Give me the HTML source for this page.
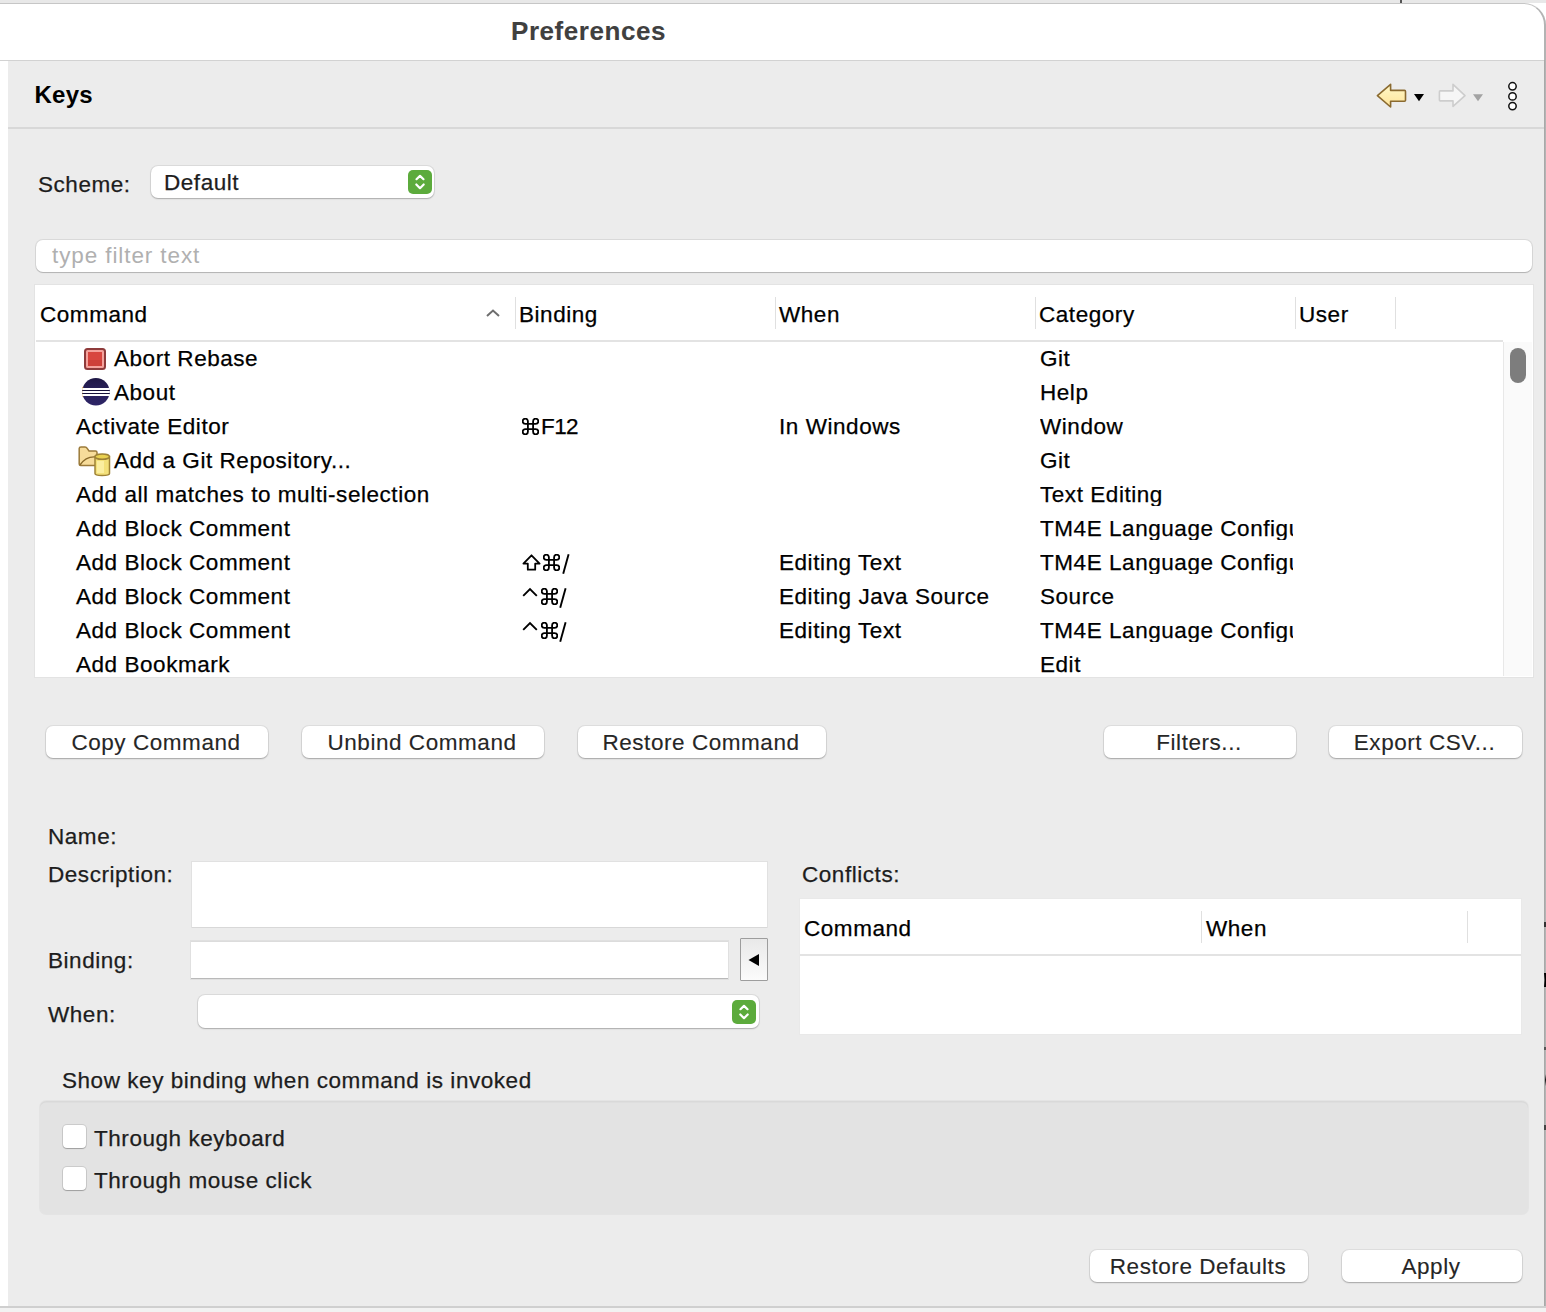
<!DOCTYPE html>
<html><head><meta charset="utf-8">
<style>
*{box-sizing:border-box;margin:0;padding:0}
html,body{width:1546px;height:1312px;overflow:hidden;background:#fff;font-family:"Liberation Sans",sans-serif;color:#1d1d1d;position:relative}
.a{position:absolute}
.t{position:absolute;white-space:nowrap;-webkit-text-stroke:0.25px currentColor}
.btn{position:absolute;background:#fff;border-radius:7px;box-shadow:0 0 0 1px rgba(0,0,0,0.06),0 1px 1.5px rgba(0,0,0,0.25)}
.vsep{position:absolute;width:1px;background:#e0e0e0}
</style></head><body>
<div class="a" style="left:0;top:0;width:1546px;height:3px;background:#e8e8e8"></div>
<div class="a" style="left:1400px;top:0;width:1.5px;height:4px;background:#555"></div>
<div class="a" style="left:0;top:3px;width:1546px;height:57px;background:#fff;border-top-right-radius:22px;border-top:1px solid #c6c6c6;border-right:2px solid #b3b3b3"></div>
<div class="a" style="left:0;top:60px;width:1544px;height:1px;background:#d2d2d2"></div>
<div class="t" style="left:511px;top:18.29px;font-size:26px;line-height:26px;letter-spacing:0.55px;color:#404040;font-weight:700;-webkit-text-stroke:0.1px #404040">Preferences</div>
<div class="a" style="left:1544px;top:60px;width:2px;height:1252px;background:linear-gradient(90deg,#a3a3a3,#b9b9b9)"></div>
<div class="a" style="left:1543px;top:61px;width:1px;height:1245px;background:#f2f2f2"></div>
<svg class="a" style="left:1543px;top:973px" width="3" height="14" viewBox="0 0 3 14"><path d="M1 0 H3 V14 H1 Q2.2 7 1 0Z" fill="#000"/></svg>
<div class="a" style="left:1544px;top:922px;width:2px;height:5px;background:#333"></div>
<div class="a" style="left:1544px;top:1047px;width:2px;height:3px;background:#555"></div>
<div class="a" style="left:1544px;top:1125px;width:2px;height:5px;background:#444"></div>
<svg class="a" style="left:1543px;top:1074px" width="3" height="12" viewBox="0 0 3 12"><path d="M3 0 V12 Q1.2 6 3 0Z" fill="#000"/></svg>
<div class="a" style="left:0;top:61px;width:8px;height:1245px;background:#fff"></div>
<div class="a" style="left:8px;top:61px;width:1536px;height:1245px;background:#ececec"></div>
<div class="a" style="left:0;top:1306px;width:1546px;height:2px;background:#cfcfcf"></div>
<div class="a" style="left:0;top:1308px;width:1546px;height:4px;background:#f2f2f2"></div>
<div class="t" style="left:34.5px;top:83.28px;font-size:24px;line-height:24px;letter-spacing:0.25px;color:#000;font-weight:700;-webkit-text-stroke:0">Keys</div>
<svg class="a" style="left:1375px;top:82px" width="34" height="28" viewBox="0 0 34 28"><defs><linearGradient id="ag" x1="0" y1="0" x2="0" y2="1"><stop offset="0" stop-color="#fff8c8"/><stop offset="1" stop-color="#ffe49a"/></linearGradient></defs><path d="M2.4 13.6 L15.6 2.3 V8.4 H29.5 Q30.5 8.4 30.5 9.4 V18.2 Q30.5 19.2 29.5 19.2 H15.6 V25 Z" fill="url(#ag)" stroke="#8a6a30" stroke-width="1.6" stroke-linejoin="round"/></svg>
<svg class="a" style="left:1413px;top:93px" width="12" height="9" viewBox="0 0 12 9"><path d="M1 1 H11 L6 8.2 Z" fill="#000"/></svg>
<svg class="a" style="left:1437px;top:82px" width="32" height="28" viewBox="0 0 32 28"><path d="M28 13.7 L16 2.4 V8.9 H3.2 Q2.4 8.9 2.4 9.7 V18.1 Q2.4 18.9 3.2 18.9 H16 V24.4 Z" fill="#f6f6f6" stroke="#cdcdcd" stroke-width="1.6" stroke-linejoin="round"/></svg>
<svg class="a" style="left:1472px;top:93px" width="12" height="9" viewBox="0 0 12 9"><path d="M1 1.2 H11 L6 8.2 Z" fill="#a3a3a3"/></svg>
<svg class="a" style="left:1504px;top:79px" width="17" height="35" viewBox="0 0 17 35"><g fill="#fff" stroke="#111" stroke-width="1.5"><circle cx="8.5" cy="7.3" r="3.7"/><circle cx="8.5" cy="17.4" r="3.7"/><circle cx="8.5" cy="27.1" r="3.7"/></g></svg>
<div class="a" style="left:8px;top:127px;width:1536px;height:2px;background:#d8d8d8"></div>
<div class="t" style="left:38px;top:173.85px;font-size:22.5px;line-height:22.5px;letter-spacing:0.55px">Scheme:</div>
<div class="a" style="left:151px;top:166px;width:283px;height:32px;background:#fff;border-radius:7px;box-shadow:0 0 0 1px rgba(0,0,0,0.07),0 1px 1.5px rgba(0,0,0,0.22)"></div>
<div class="t" style="left:164px;top:171.85px;font-size:22.5px;line-height:22.5px;letter-spacing:0.55px">Default</div>
<div class="a" style="left:408px;top:170px;width:24px;height:24px;background:#5cab3c;border-radius:5px"></div><svg class="a" style="left:408px;top:170px" width="24" height="24" viewBox="0 0 24 24"><path d="M8.5 9.2 L12 5.9 L15.5 9.2 M8.3 14.5 L12 18.2 L15.7 14.5" stroke="#fff" stroke-width="2.2" fill="none" stroke-linecap="round" stroke-linejoin="round"/></svg>
<div class="a" style="left:36px;top:240px;width:1496px;height:32px;background:#fff;border-radius:7px;box-shadow:0 0 0 1px rgba(0,0,0,0.08),0 1px 1px rgba(0,0,0,0.18)"></div>
<div class="t" style="left:52px;top:244.85px;font-size:22.5px;line-height:22.5px;letter-spacing:0.9px;color:#b0b0b0;-webkit-text-stroke:0">type filter text</div>
<div class="a" style="left:35px;top:285px;width:1498px;height:392px;background:#fff;box-shadow:0 0 0 1px #e3e3e3"></div>
<div class="a" style="left:36px;top:340px;width:1467px;height:2px;background:#e3e3e3"></div>
<div class="vsep" style="left:515px;top:297px;height:32px"></div>
<div class="vsep" style="left:775px;top:297px;height:32px"></div>
<div class="vsep" style="left:1035px;top:297px;height:32px"></div>
<div class="vsep" style="left:1295px;top:297px;height:32px"></div>
<div class="vsep" style="left:1395px;top:297px;height:32px"></div>
<div class="t" style="left:40px;top:303.85px;font-size:22.5px;line-height:22.5px;letter-spacing:0.55px;color:#000">Command</div>
<div class="t" style="left:519px;top:303.85px;font-size:22.5px;line-height:22.5px;letter-spacing:0.55px;color:#000">Binding</div>
<div class="t" style="left:779px;top:303.85px;font-size:22.5px;line-height:22.5px;letter-spacing:0.55px;color:#000">When</div>
<div class="t" style="left:1039px;top:303.85px;font-size:22.5px;line-height:22.5px;letter-spacing:0.55px;color:#000">Category</div>
<div class="t" style="left:1299px;top:303.85px;font-size:22.5px;line-height:22.5px;letter-spacing:0.55px;color:#000">User</div>
<svg class="a" style="left:484px;top:306px" width="18" height="14" viewBox="0 0 18 14"><path d="M3 10 L9 4.5 L15 10" stroke="#6e6e6e" stroke-width="2" fill="none"/></svg>
<div class="a" style="left:1503px;top:342px;width:29px;height:334px;background:#fafafa;border-left:1px solid #e8e8e8"></div>
<div class="a" style="left:1510px;top:348px;width:16px;height:35px;background:#7d7d7d;border-radius:8px"></div>
<div class="a" style="left:36px;top:342px;width:1467px;height:334px;overflow:hidden">
<div class="t" style="left:78px;top:5.85px;font-size:22.5px;line-height:22.5px;letter-spacing:0.55px;color:#000">Abort Rebase</div>
<svg class="a" style="left:48px;top:6px" width="22" height="22" viewBox="0 0 22 22"><rect x="1" y="1" width="20" height="20" rx="2.5" fill="#f4a29c" stroke="#8e3b3b" stroke-width="2"/><rect x="4" y="4" width="14" height="14" fill="#d8463f"/><rect x="4" y="12" width="14" height="6" fill="#c63c36" opacity="0.6"/></svg>
<div class="t" style="left:1004px;top:5.85px;font-size:22.5px;line-height:22.5px;letter-spacing:0.55px;color:#000;width:253px;overflow:hidden">Git</div>
<div class="t" style="left:78px;top:39.85px;font-size:22.5px;line-height:22.5px;letter-spacing:0.55px;color:#000">About</div>
<svg class="a" style="left:46px;top:36px" width="28" height="28" viewBox="0 0 28 28"><defs><linearGradient id="eg" x1="0" y1="0" x2="0" y2="1"><stop offset="0" stop-color="#1f1846"/><stop offset="0.5" stop-color="#2a225c"/><stop offset="1" stop-color="#2d2466"/></linearGradient></defs><circle cx="13.9" cy="13.8" r="13.7" fill="url(#eg)"/><path d="M0.8 9 Q-0.6 13.8 0.8 18.6" stroke="#e9a640" stroke-width="1.2" fill="none" opacity="0.8"/><rect x="0.3" y="10" width="27.4" height="2" fill="#fff"/><rect x="0.3" y="12" width="27.4" height="1" fill="#17123a"/><rect x="0.3" y="13" width="27.4" height="2" fill="#fff"/><rect x="0.3" y="15" width="27.4" height="1" fill="#17123a"/><rect x="0.3" y="16" width="27.4" height="2" fill="#fff"/></svg>
<div class="t" style="left:1004px;top:39.85px;font-size:22.5px;line-height:22.5px;letter-spacing:0.55px;color:#000;width:253px;overflow:hidden">Help</div>
<div class="t" style="left:40px;top:73.85px;font-size:22.5px;line-height:22.5px;letter-spacing:0.55px;color:#000">Activate Editor</div>
<svg class="a" style="left:485.5px;top:75.5px" width="17" height="17" viewBox="2.2 2.2 19.6 19.6"><path d="M15 6v12a3 3 0 1 0 3-3H6a3 3 0 1 0 3 3V6a3 3 0 1 0-3 3h12a3 3 0 1 0-3-3" fill="none" stroke="#000" stroke-width="2.1"/></svg>
<div class="t" style="left:505px;top:73.85px;font-size:22.5px;line-height:22.5px;letter-spacing:-0.6px;color:#000">F12</div>
<div class="t" style="left:743px;top:73.85px;font-size:22.5px;line-height:22.5px;letter-spacing:0.55px;color:#000">In Windows</div>
<div class="t" style="left:1004px;top:73.85px;font-size:22.5px;line-height:22.5px;letter-spacing:0.55px;color:#000;width:253px;overflow:hidden">Window</div>
<div class="t" style="left:78px;top:107.85px;font-size:22.5px;line-height:22.5px;letter-spacing:0.55px;color:#000">Add a Git Repository...</div>
<svg class="a" style="left:41px;top:103px" width="34" height="32" viewBox="0 0 34 32"><path d="M2.2 3.5 V19 Q2.2 20.5 3.7 20.5 H20 V7.5 Q20 6 18.5 6 H12 L10 3.2 Q9.5 2 8 2 H4 Q2.2 2 2.2 3.5 Z" fill="#f7dc9a" stroke="#9b7a3a" stroke-width="1.5"/><path d="M3 20 Q9 11 19 12" stroke="#8a6a2a" stroke-width="1.4" fill="none"/><path d="M18 11.5 V28.5 Q18 30.5 25 30.5 Q32.5 30.5 32.5 28.5 V11.5 Z" fill="#f3e07a" stroke="#9e8236" stroke-width="1.5"/><ellipse cx="25.2" cy="11.7" rx="7.2" ry="2.6" fill="#e8d050" stroke="#9e8236" stroke-width="1.5"/><rect x="20" y="16" width="7" height="12" fill="#fdf3b0" opacity="0.7"/></svg>
<div class="t" style="left:1004px;top:107.85px;font-size:22.5px;line-height:22.5px;letter-spacing:0.55px;color:#000;width:253px;overflow:hidden">Git</div>
<div class="t" style="left:40px;top:141.85px;font-size:22.5px;line-height:22.5px;letter-spacing:0.55px;color:#000">Add all matches to multi-selection</div>
<div class="t" style="left:1004px;top:141.85px;font-size:22.5px;line-height:22.5px;letter-spacing:0.55px;color:#000;width:253px;overflow:hidden">Text Editing</div>
<div class="t" style="left:40px;top:175.85px;font-size:22.5px;line-height:22.5px;letter-spacing:0.55px;color:#000">Add Block Comment</div>
<div class="t" style="left:1004px;top:175.85px;font-size:22.5px;line-height:22.5px;letter-spacing:0.55px;color:#000;width:253px;overflow:hidden">TM4E Language Configuration</div>
<div class="t" style="left:40px;top:209.85px;font-size:22.5px;line-height:22.5px;letter-spacing:0.55px;color:#000">Add Block Comment</div>
<svg class="a" style="left:485.5px;top:211.5px" width="19" height="17" viewBox="0 0 19 17"><path d="M9.5 1.3 L17.6 9.6 H13.2 V15.7 H5.8 V9.6 H1.4 Z" fill="none" stroke="#000" stroke-width="1.8" stroke-linejoin="round"/></svg>
<svg class="a" style="left:507.29999999999995px;top:211.5px" width="17" height="17" viewBox="2.2 2.2 19.6 19.6"><path d="M15 6v12a3 3 0 1 0 3-3H6a3 3 0 1 0 3 3V6a3 3 0 1 0-3 3h12a3 3 0 1 0-3-3" fill="none" stroke="#000" stroke-width="2.1"/></svg>
<svg class="a" style="left:525.5px;top:211px" width="8" height="22" viewBox="0 0 8 22"><path d="M6.6 1.2 L1.2 20.8" stroke="#000" stroke-width="1.9"/></svg>
<div class="t" style="left:743px;top:209.85px;font-size:22.5px;line-height:22.5px;letter-spacing:0.55px;color:#000">Editing Text</div>
<div class="t" style="left:1004px;top:209.85px;font-size:22.5px;line-height:22.5px;letter-spacing:0.55px;color:#000;width:253px;overflow:hidden">TM4E Language Configuration</div>
<div class="t" style="left:40px;top:243.85px;font-size:22.5px;line-height:22.5px;letter-spacing:0.55px;color:#000">Add Block Comment</div>
<svg class="a" style="left:485.5px;top:245px" width="16" height="10" viewBox="0 0 16 10"><path d="M1.2 8.8 L8 2 L14.8 8.8" fill="none" stroke="#000" stroke-width="1.9"/></svg>
<svg class="a" style="left:504.79999999999995px;top:245.5px" width="17" height="17" viewBox="2.2 2.2 19.6 19.6"><path d="M15 6v12a3 3 0 1 0 3-3H6a3 3 0 1 0 3 3V6a3 3 0 1 0-3 3h12a3 3 0 1 0-3-3" fill="none" stroke="#000" stroke-width="2.1"/></svg>
<svg class="a" style="left:523px;top:245px" width="8" height="22" viewBox="0 0 8 22"><path d="M6.6 1.2 L1.2 20.8" stroke="#000" stroke-width="1.9"/></svg>
<div class="t" style="left:743px;top:243.85px;font-size:22.5px;line-height:22.5px;letter-spacing:0.55px;color:#000">Editing Java Source</div>
<div class="t" style="left:1004px;top:243.85px;font-size:22.5px;line-height:22.5px;letter-spacing:0.55px;color:#000;width:253px;overflow:hidden">Source</div>
<div class="t" style="left:40px;top:277.85px;font-size:22.5px;line-height:22.5px;letter-spacing:0.55px;color:#000">Add Block Comment</div>
<svg class="a" style="left:485.5px;top:279px" width="16" height="10" viewBox="0 0 16 10"><path d="M1.2 8.8 L8 2 L14.8 8.8" fill="none" stroke="#000" stroke-width="1.9"/></svg>
<svg class="a" style="left:504.79999999999995px;top:279.5px" width="17" height="17" viewBox="2.2 2.2 19.6 19.6"><path d="M15 6v12a3 3 0 1 0 3-3H6a3 3 0 1 0 3 3V6a3 3 0 1 0-3 3h12a3 3 0 1 0-3-3" fill="none" stroke="#000" stroke-width="2.1"/></svg>
<svg class="a" style="left:523px;top:279px" width="8" height="22" viewBox="0 0 8 22"><path d="M6.6 1.2 L1.2 20.8" stroke="#000" stroke-width="1.9"/></svg>
<div class="t" style="left:743px;top:277.85px;font-size:22.5px;line-height:22.5px;letter-spacing:0.55px;color:#000">Editing Text</div>
<div class="t" style="left:1004px;top:277.85px;font-size:22.5px;line-height:22.5px;letter-spacing:0.55px;color:#000;width:253px;overflow:hidden">TM4E Language Configuration</div>
<div class="t" style="left:40px;top:311.85px;font-size:22.5px;line-height:22.5px;letter-spacing:0.55px;color:#000">Add Bookmark</div>
<div class="t" style="left:1004px;top:311.85px;font-size:22.5px;line-height:22.5px;letter-spacing:0.55px;color:#000;width:253px;overflow:hidden">Edit</div>
</div>
<div class="btn" style="left:46px;top:726px;width:222px;height:32px"></div><div class="t" style="left:45px;top:731.85px;font-size:22.5px;line-height:22.5px;letter-spacing:0.55px;color:#262626;width:222px;text-align:center;-webkit-text-stroke:0.12px #262626">Copy Command</div>
<div class="btn" style="left:302px;top:726px;width:242px;height:32px"></div><div class="t" style="left:301px;top:731.85px;font-size:22.5px;line-height:22.5px;letter-spacing:0.55px;color:#262626;width:242px;text-align:center;-webkit-text-stroke:0.12px #262626">Unbind Command</div>
<div class="btn" style="left:578px;top:726px;width:248px;height:32px"></div><div class="t" style="left:577px;top:731.85px;font-size:22.5px;line-height:22.5px;letter-spacing:0.55px;color:#262626;width:248px;text-align:center;-webkit-text-stroke:0.12px #262626">Restore Command</div>
<div class="btn" style="left:1104px;top:726px;width:192px;height:32px"></div><div class="t" style="left:1103px;top:731.85px;font-size:22.5px;line-height:22.5px;letter-spacing:0.55px;color:#262626;width:192px;text-align:center;-webkit-text-stroke:0.12px #262626">Filters...</div>
<div class="btn" style="left:1329px;top:726px;width:193px;height:32px"></div><div class="t" style="left:1328px;top:731.85px;font-size:22.5px;line-height:22.5px;letter-spacing:0.55px;color:#262626;width:193px;text-align:center;-webkit-text-stroke:0.12px #262626">Export CSV...</div>
<div class="t" style="left:48px;top:825.85px;font-size:22.5px;line-height:22.5px;letter-spacing:0.55px">Name:</div>
<div class="t" style="left:48px;top:863.85px;font-size:22.5px;line-height:22.5px;letter-spacing:0.55px">Description:</div>
<div class="t" style="left:48px;top:949.85px;font-size:22.5px;line-height:22.5px;letter-spacing:0.55px">Binding:</div>
<div class="t" style="left:48px;top:1003.85px;font-size:22.5px;line-height:22.5px;letter-spacing:0.55px">When:</div>
<div class="a" style="left:191.5px;top:861.5px;width:575.5px;height:65.5px;background:#fff;box-shadow:0 0 0 1px rgba(0,0,0,0.045),0 1px 0 rgba(0,0,0,0.04)"></div>
<div class="a" style="left:191px;top:941px;width:537px;height:38px;background:#fff;border-top:1px solid #dcdcdc;border-bottom:1px solid #b9b9b9;box-shadow:0 0 0 1px rgba(0,0,0,0.05)"></div>
<div class="a" style="left:740px;top:938px;width:28px;height:43px;background:linear-gradient(#e9e9e9,#fbfbfb);border:1.5px solid #9d9d9d;border-radius:1px"></div>
<svg class="a" style="left:746px;top:952px" width="16" height="16" viewBox="0 0 16 16"><path d="M2.5 8 L13 2 V14 Z" fill="#000"/></svg>
<div class="a" style="left:198px;top:995px;width:561px;height:33px;background:#fff;border-radius:7px;box-shadow:0 0 0 1px rgba(0,0,0,0.07),0 1px 1.5px rgba(0,0,0,0.22)"></div>
<div class="a" style="left:732px;top:1000px;width:24px;height:24px;background:#5cab3c;border-radius:5px"></div><svg class="a" style="left:732px;top:1000px" width="24" height="24" viewBox="0 0 24 24"><path d="M8.5 9.2 L12 5.9 L15.5 9.2 M8.3 14.5 L12 18.2 L15.7 14.5" stroke="#fff" stroke-width="2.2" fill="none" stroke-linecap="round" stroke-linejoin="round"/></svg>
<div class="t" style="left:802px;top:863.85px;font-size:22.5px;line-height:22.5px;letter-spacing:0.55px">Conflicts:</div>
<div class="a" style="left:800px;top:899px;width:721px;height:135px;background:#fff;box-shadow:0 0 0 1px #e9e9e9"></div>
<div class="a" style="left:800px;top:954px;width:721px;height:2px;background:#e3e3e3"></div>
<div class="vsep" style="left:1201px;top:911px;height:32px"></div>
<div class="vsep" style="left:1467px;top:911px;height:32px"></div>
<div class="t" style="left:804px;top:917.85px;font-size:22.5px;line-height:22.5px;letter-spacing:0.55px;color:#000">Command</div>
<div class="t" style="left:1206px;top:917.85px;font-size:22.5px;line-height:22.5px;letter-spacing:0.55px;color:#000">When</div>
<div class="t" style="left:62px;top:1069.85px;font-size:22.5px;line-height:22.5px;letter-spacing:0.55px">Show key binding when command is invoked</div>
<div class="a" style="left:40px;top:1100.5px;width:1488px;height:113px;background:#e3e3e3;border-radius:6px;box-shadow:inset 0 1.5px 0 rgba(0,0,0,0.045),0 0 0 1px rgba(0,0,0,0.03)"></div>
<div class="a" style="left:62.5px;top:1124.5px;width:23px;height:23px;background:#fff;border-radius:4px;box-shadow:0 0 0 1px rgba(0,0,0,0.1),0 1px 1px rgba(0,0,0,0.22)"></div>
<div class="a" style="left:62.5px;top:1166.5px;width:23px;height:23px;background:#fff;border-radius:4px;box-shadow:0 0 0 1px rgba(0,0,0,0.1),0 1px 1px rgba(0,0,0,0.22)"></div>
<div class="t" style="left:94px;top:1127.85px;font-size:22.5px;line-height:22.5px;letter-spacing:0.55px">Through keyboard</div>
<div class="t" style="left:94px;top:1169.85px;font-size:22.5px;line-height:22.5px;letter-spacing:0.55px">Through mouse click</div>
<div class="btn" style="left:1090px;top:1250px;width:218px;height:32px"></div><div class="t" style="left:1089px;top:1255.85px;font-size:22.5px;line-height:22.5px;letter-spacing:0.55px;color:#262626;width:218px;text-align:center;-webkit-text-stroke:0.12px #262626">Restore Defaults</div>
<div class="btn" style="left:1342px;top:1250px;width:180px;height:32px"></div><div class="t" style="left:1341px;top:1255.85px;font-size:22.5px;line-height:22.5px;letter-spacing:0.55px;color:#262626;width:180px;text-align:center;-webkit-text-stroke:0.12px #262626">Apply</div>
</body></html>
